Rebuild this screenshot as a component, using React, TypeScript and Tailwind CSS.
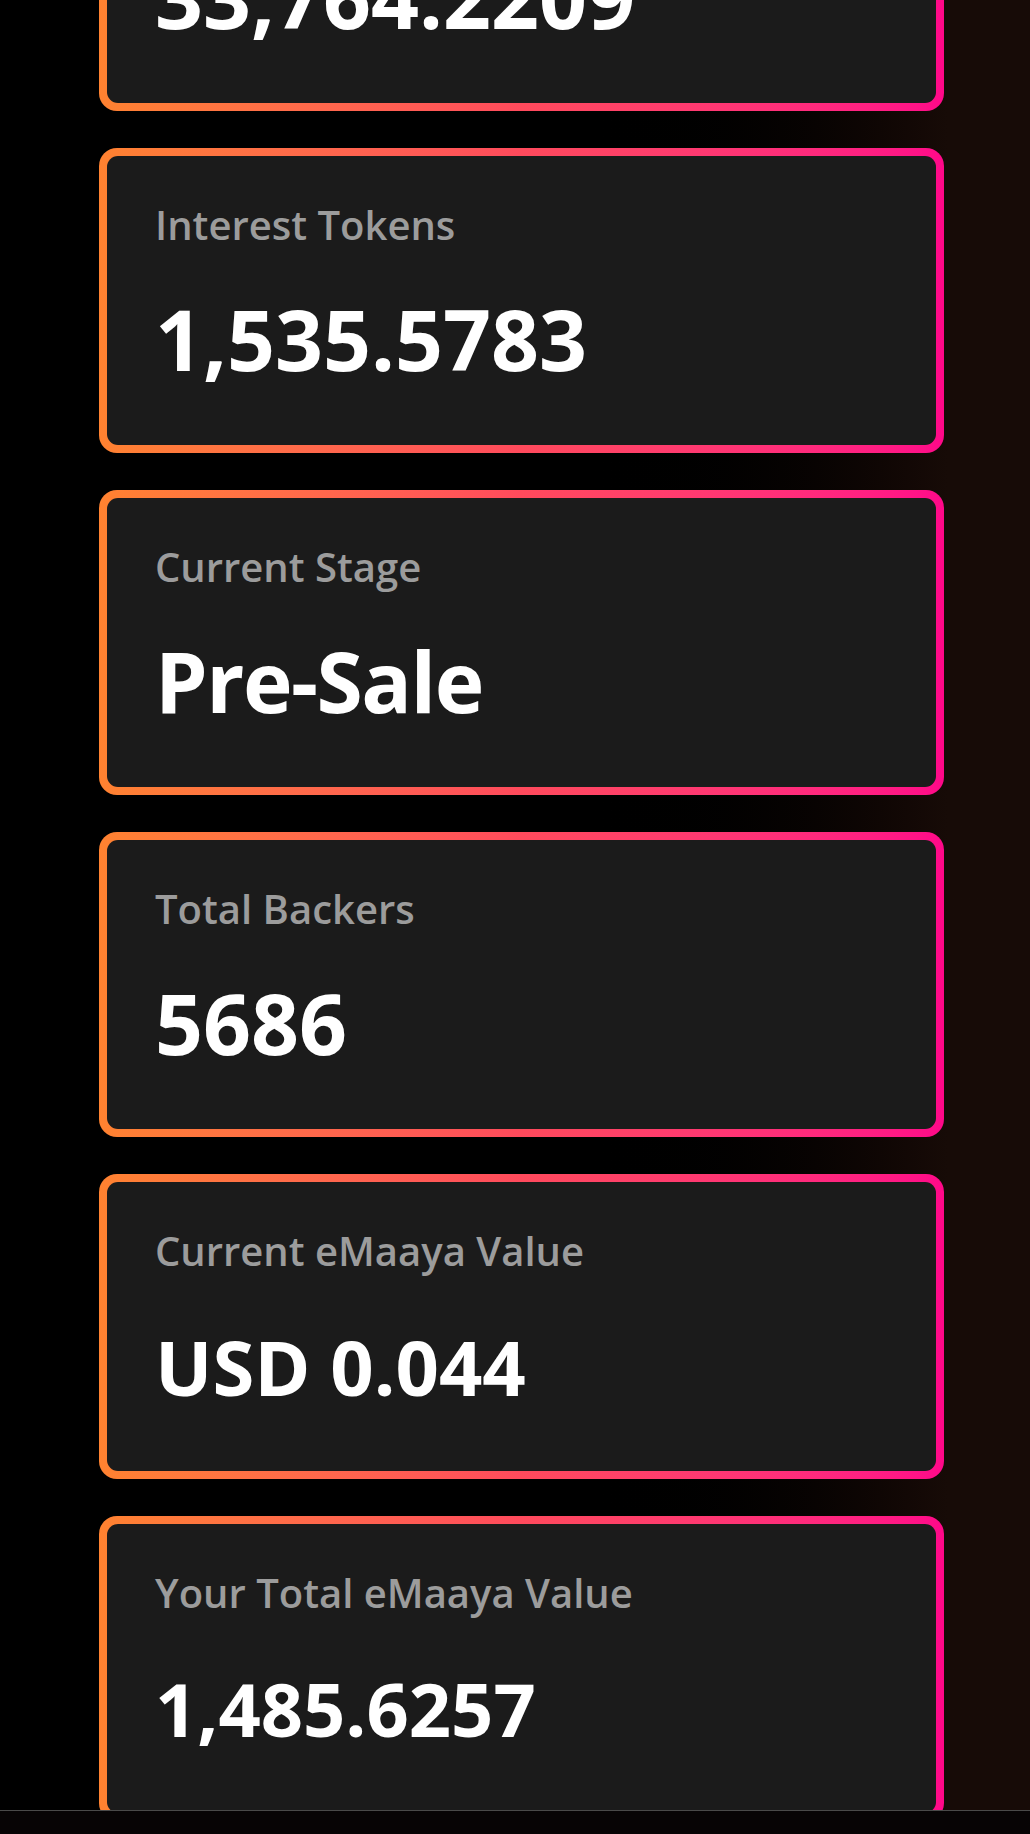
const stats = [
  { label: "Total Tokens", value: "33,764.2209", size: "text-[84px]" },
  { label: "Interest Tokens", value: "1,535.5783", size: "text-[84px]" },
  { label: "Current Stage", value: "Pre-Sale", size: "text-[84px] tracking-[-1.5px]" },
  { label: "Total Backers", value: "5686", size: "text-[84px]" },
  { label: "Current eMaaya Value", value: "USD 0.044", size: "text-[76px] mt-[47px]" },
  { label: "Your Total eMaaya Value", value: "1,485.6257", size: "text-[74px] mt-[47px]" },
];

function StatCard({ label, value, size }: { label: string; value: string; size: string }) {
  return (
    <div className="rounded-[18px] bg-gradient-to-r from-[#ff8230] via-[#ff4a5c] to-[#ff0789] p-[8px]">
      <div className="flex h-[289px] flex-col rounded-[11px] bg-[#1b1b1b] pt-[42px] pl-[48px]">
        <div className="text-[40px] leading-[54px] font-semibold text-[#9c9c9c]">{label}</div>
        <div className={`mt-[45px] leading-[84px] font-bold text-white ${size}`}>{value}</div>
      </div>
    </div>
  );
}

export default function App() {
  return (
    <div
      className="flex h-[1834px] flex-col overflow-hidden bg-gradient-to-r from-black from-55% to-[#170b07] to-92%"
      style={{ fontFamily: '"Open Sans", "Noto Sans", sans-serif' }}
    >
      <main className="min-h-0 flex-1 overflow-hidden">
        <div className="-mt-[194px] ml-[99px] flex w-[845px] flex-col gap-[37px]">
          {stats.map((s) => (
            <StatCard key={s.label} label={s.label} value={s.value} size={s.size} />
          ))}
        </div>
      </main>
      <nav className="h-[24px] shrink-0 border-t border-[#4a4a4a] bg-[#070405]" />
    </div>
  );
}
